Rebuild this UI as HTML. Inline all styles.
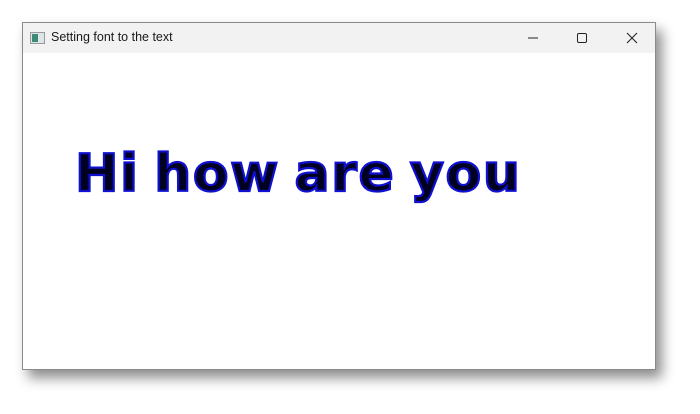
<!DOCTYPE html>
<html><head><style>
html,body{margin:0;padding:0;background:#fff;width:700px;height:414px;overflow:hidden}
.win{position:absolute;left:22px;top:22px;width:632px;height:346px;border:1px solid #8a8a8a;background:#fff;box-shadow:6px 8px 12px rgba(0,0,0,0.45)}
.tb{position:absolute;left:0;top:0;width:632px;height:30px;background:#f2f2f2}
.title{position:absolute;left:28px;top:7px;font:12.5px "Liberation Sans",sans-serif;color:#1a1a1a}
.ico{position:absolute;left:7px;top:9px;width:13px;height:10px;border:1px solid #999;background:#dfe6e6}
.ico:before{content:"";position:absolute;left:1px;top:1px;width:6px;height:8px;background:#3c8a78}
.txt{position:absolute;left:52px;top:121px;font:bold 52px "DejaVu Sans",sans-serif;color:#000020;-webkit-text-stroke:2.2px #1010d0;white-space:nowrap;text-shadow:0 0 1px #3030ff;word-spacing:-5px;letter-spacing:1.6px}
</style></head><body>
<div class="win">
<div class="tb">
<div class="ico"></div>
<div class="title">Setting font to the text</div>
<svg style="position:absolute;left:500px;top:6px" width="130" height="18">
<line x1="5" y1="9" x2="15" y2="9" stroke="#222" stroke-width="1"/>
<rect x="54.5" y="4.5" width="9" height="9" rx="1.5" fill="none" stroke="#222" stroke-width="1"/>
<line x1="104" y1="4" x2="114" y2="14" stroke="#222" stroke-width="1.1"/>
<line x1="114" y1="4" x2="104" y2="14" stroke="#222" stroke-width="1.1"/>
</svg>
</div>
<div class="txt">Hi how are you</div>
</div>
</body></html>
